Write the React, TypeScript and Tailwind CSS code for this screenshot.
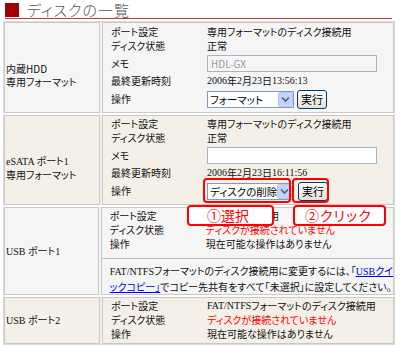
import React from 'react';

const Select: React.FC<{ label: string; w: string }> = ({ label, w }) => (
    <div className={`${w} h-[17px] flex items-center border border-[#7f9db9] bg-white`}>
        <span className="flex-1 pl-[2px] text-[10.5px] leading-[15px] text-black whitespace-nowrap overflow-hidden">{label}</span>
        <span className="w-[15px] h-[15px] shrink-0 flex items-center justify-center bg-[#c3d3fd] border border-[#b5c8f2] rounded-[2px]">
            <svg width="9" height="7" viewBox="0 0 9 7">
                <path d="M1 1.5 L4.5 5 L8 1.5" fill="none" stroke="#4d6185" strokeWidth="1.6" />
            </svg>
        </span>
    </div>
);

const RunButton: React.FC<{ gap?: string }> = ({ gap = 'ml-[3px]' }) => (
    <div className={`${gap} w-[30px] h-[19px] flex items-center justify-center rounded-[3px] border border-[#003c74] bg-gradient-to-b from-white to-[#e3e1d6] text-[11px] leading-[13px] text-black`}>
        実行
    </div>
);

const Line: React.FC<{ label: string; h?: string; children: React.ReactNode }> = ({ label, h = 'h-[14px]', children }) => (
    <div className={`flex items-center ${h}`}>
        <div className="w-[96px] shrink-0 whitespace-nowrap">{label}</div>
        <div className="flex items-center whitespace-nowrap">{children}</div>
    </div>
);

const serif = "font-['Liberation_Serif',serif]";

const App: React.FC = () => {
    return (
        <div className="w-[400px] h-[345px] bg-white relative overflow-hidden font-['Noto_Sans_CJK_JP',sans-serif] [font-feature-settings:'palt'] text-[10px] leading-[14px] text-[#111]">
            <div className="ml-[5px] w-[387px] h-[19px] flex items-end border-b border-[#c03a3a]">
                <div className="w-[14px] h-[14px] bg-[#a00000] mb-[1px]" />
                <div className="ml-[8px] text-[15px] leading-[17px] text-[#555] font-light tracking-[1px]">ディスクの一覧</div>
            </div>

            <div className="ml-[3px] mt-[2px] w-[392px] border border-[#dcdcdc] flex flex-col gap-[2px]">
                {/* 内蔵HDD */}
                <div className="flex gap-[2px] h-[91px] bg-[#f5f5f5]">
                    <div className="w-[96px] border border-[#c8c8c8] flex items-center pl-px pt-[14px] leading-[13px]">
                        <div>内蔵HDD<br />専用フォーマット</div>
                    </div>
                    <div className="flex-1 border border-[#c8c8c8] pl-[8px] pt-[2px]">
                        <Line label="ポート設定">専用フォーマットのディスク接続用</Line>
                        <Line label="ディスク状態">正常</Line>
                        <Line label="メモ" h="h-[21px]">
                            <div className="w-[170px] h-[17px] border border-[#a5b5c9] bg-[#f5f5f5] pl-[3px] text-[10px] leading-[15px] text-[#999]">HDL-GX</div>
                        </Line>
                        <Line label="最終更新時刻"><span className={serif}>2006</span>年<span className={serif}>2</span>月<span className={serif}>23</span>日<span className={serif}>13:56:13</span></Line>
                        <Line label="操作" h="h-[22px]">
                            <Select label="フォーマット" w="w-[87px]" />
                            <RunButton />
                        </Line>
                    </div>
                </div>

                {/* eSATA */}
                <div className="flex gap-[2px] h-[90px] bg-[#f4f0e7]">
                    <div className="w-[96px] border border-[#c8c8c8] flex items-center pl-px pt-[14px] leading-[13px]">
                        <div><span className={serif}>eSATA </span>ポート<span className={serif}>1</span><br />専用フォーマット</div>
                    </div>
                    <div className="flex-1 border border-[#c8c8c8] pl-[8px] pt-px">
                        <Line label="ポート設定">専用フォーマットのディスク接続用</Line>
                        <Line label="ディスク状態">正常</Line>
                        <Line label="メモ" h="h-[21px]">
                            <div className="w-[170px] h-[17px] border border-[#a5b5c9] bg-white" />
                        </Line>
                        <Line label="最終更新時刻"><span className={serif}>2006</span>年<span className={serif}>2</span>月<span className={serif}>23</span>日<span className={serif}>16:11:56</span></Line>
                        <Line label="操作" h="h-[22px]">
                            <Select label="ディスクの削除" w="w-[86px]" />
                            <RunButton gap="ml-[5px]" />
                        </Line>
                    </div>
                </div>

                {/* USB 1 */}
                <div className="flex gap-[2px] h-[88px] bg-[#f5f5f5]">
                    <div className="w-[96px] border border-[#c8c8c8] flex items-center pl-px">
                        <div><span className={serif}>USB </span>ポート<span className={serif}>1</span></div>
                    </div>
                    <div className="flex-1 border border-[#c8c8c8] flex flex-col">
                        <div className="pl-[8px] pt-px h-[51px]">
                            <Line label="ポート設定">クイックコピー用</Line>
                            <Line label="ディスク状態"><span className="text-[#ff0000]">ディスクが接続されていません</span></Line>
                            <Line label="操作">現在可能な操作はありません</Line>
                        </div>
                        <div className="border-t border-[#bdbdbd] pl-[8px] pt-[4px] leading-[15px] whitespace-nowrap overflow-hidden">
                            <div><span className={serif}>FAT/NTFS</span>フォーマットのディスク接続用に変更するには、「<span className="text-[#0000ee] underline"><span className={serif}>USB</span>クイ</span></div>
                            <div><span className="text-[#0000ee] underline">ックコピー」</span>でコピー先共有をすべて「未選択」に設定してください。</div>
                        </div>
                    </div>
                </div>

                {/* USB 2 */}
                <div className="flex gap-[2px] h-[47px] bg-[#f4f0e7]">
                    <div className="w-[96px] border border-[#c8c8c8] flex items-center pl-px">
                        <div><span className={serif}>USB </span>ポート<span className={serif}>2</span></div>
                    </div>
                    <div className="flex-1 border border-[#c8c8c8] pl-[8px] pt-px">
                        <Line label="ポート設定"><span className={serif}>FAT/NTFS</span>フォーマットのディスク接続用</Line>
                        <Line label="ディスク状態"><span className="text-[#ff0000]">ディスクが接続されていません</span></Line>
                        <Line label="操作">現在可能な操作はありません</Line>
                    </div>
                </div>
            </div>

            {/* annotations */}
            <div className="absolute left-[203px] top-[178px] w-[88px] h-[25px] border-2 border-[#ff0000] rounded-[4px]" />
            <div className="absolute left-[292px] top-[178px] w-[37px] h-[25px] border-2 border-[#ff0000] rounded-[4px]" />
            <div className="absolute left-[187px] top-[205px] w-[87px] h-[21px] border-2 border-[#ff0000] rounded-[4px] bg-white flex items-center pl-[18px] text-[14px] leading-[17px] text-[#ff0000]">①選択</div>
            <div className="absolute left-[293px] top-[205px] w-[93px] h-[21px] border-2 border-[#ff0000] rounded-[4px] bg-white flex items-center pl-[10px] text-[14px] leading-[17px] tracking-[1px] text-[#ff0000]">②クリック</div>
        </div>
    );
};

export default App;
